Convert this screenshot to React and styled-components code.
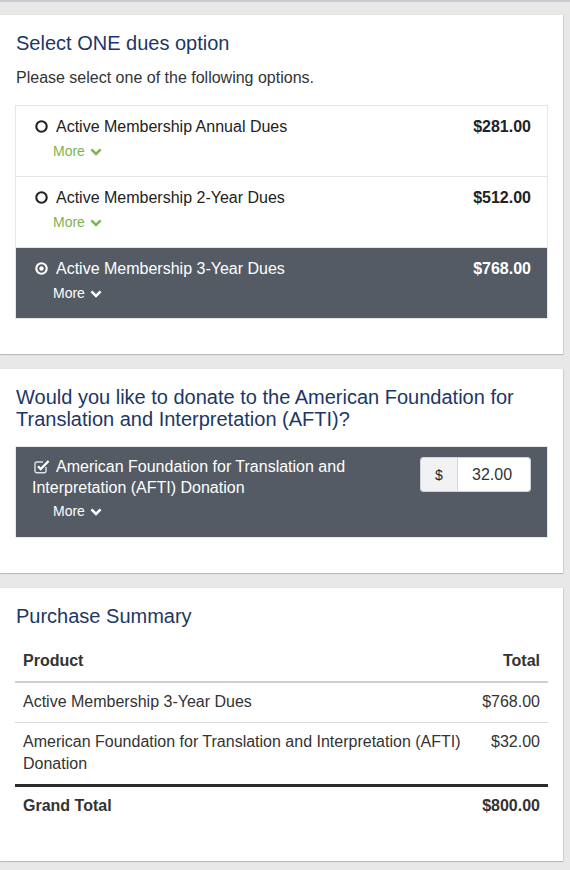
import React from 'react';
import styled, { createGlobalStyle } from 'styled-components';

const GlobalStyle = createGlobalStyle`
    html, body {
        margin: 0;
        padding: 0;
        background: #e8e8e8;
        font-family: "Liberation Sans", Arial, Helvetica, sans-serif;
        color: #222;
    }
`;

const duesOptions = [
    { id: 'annual', label: 'Active Membership Annual Dues', price: '$281.00' },
    { id: '2year', label: 'Active Membership 2-Year Dues', price: '$512.00' },
    { id: '3year', label: 'Active Membership 3-Year Dues', price: '$768.00' }
];

const summaryRows = [
    { product: 'Active Membership 3-Year Dues', total: '$768.00' },
    { product: 'American Foundation for Translation and Interpretation (AFTI) Donation', total: '$32.00' }
];

// little drawn icons (font-awesome 4 look)
const RadioIcon = ({ checked }) => (
    <svg width="13" height="13" viewBox="0 0 13 13">
        <circle cx="6.5" cy="6.5" r="5.2" fill="none" stroke="currentColor" strokeWidth="2.1" />
        {checked && <circle cx="6.5" cy="6.5" r="2.2" fill="currentColor" />}
    </svg>
);

const CheckIcon = () => (
    <svg width="16" height="15" viewBox="0 0 16 15">
        <path d="M12 8 V12 a1.8 1.8 0 0 1 -1.8 1.8 H2.8 A1.8 1.8 0 0 1 1 12 V4.8 A1.8 1.8 0 0 1 2.8 3 H9"
            fill="none" stroke="#dfe1e4" strokeWidth="1.4" />
        <polyline points="4,7.3 6.7,10 14.6,2" fill="none" stroke="currentColor" strokeWidth="2.3" />
    </svg>
);

const Chevron = () => (
    <svg width="12" height="8" viewBox="0 0 12 8">
        <polyline points="1.4,1.4 6,6 10.6,1.4" fill="none" stroke="currentColor" strokeWidth="2.6" />
    </svg>
);

export default function App() {
    const selected = '3year';

    return (
        <Page>
            <GlobalStyle />

            {/* dues */}
            <Card>
                <Title>Select ONE dues option</Title>
                <Intro>Please select one of the following options.</Intro>
                <OptionList>
                    {duesOptions.map((o) => {
                        const active = o.id === selected;
                        return (
                            <OptionRow key={o.id} $active={active}>
                                <OptionMain>
                                    <OptionLabel>
                                        <IconSlot><RadioIcon checked={active} /></IconSlot>
                                        {o.label}
                                    </OptionLabel>
                                    <MoreLink $active={active}>
                                        More <Chevron />
                                    </MoreLink>
                                </OptionMain>
                                <Price>{o.price}</Price>
                            </OptionRow>
                        );
                    })}
                </OptionList>
            </Card>

            {/* donation */}
            <Card>
                <Title>
                    Would you like to donate to the American Foundation for Translation and Interpretation (AFTI)?
                </Title>
                <DonateBox>
                    <DonateText>
                        <OptionLabel>
                            <IconSlot $check><CheckIcon /></IconSlot>
                            American Foundation for Translation and Interpretation (AFTI) Donation
                        </OptionLabel>
                        <MoreLink $active $donate>
                            More <Chevron />
                        </MoreLink>
                    </DonateText>
                    <InputGroup>
                        <Addon>$</Addon>
                        <AmountInput defaultValue="32.00" />
                    </InputGroup>
                </DonateBox>
            </Card>

            {/* summary */}
            <Card $last>
                <Title>Purchase Summary</Title>
                <SummaryTable>
                    <thead>
                        <tr>
                            <th>Product</th>
                            <th className="right">Total</th>
                        </tr>
                    </thead>
                    <tbody>
                        {summaryRows.map((r) => (
                            <tr key={r.product}>
                                <td>{r.product}</td>
                                <td className="right">{r.total}</td>
                            </tr>
                        ))}
                    </tbody>
                    <tfoot>
                        <tr>
                            <td>Grand Total</td>
                            <td className="right">$800.00</td>
                        </tr>
                    </tfoot>
                </SummaryTable>
            </Card>
        </Page>
    );
}

/* ---------------- styles ---------------- */

const Page = styled.div`
    border-top: 2px solid #c7cbd1;
    padding: 13px 7px 8px 0;
    display: flex;
    flex-direction: column;
    gap: 15px;
`;

const Card = styled.section`
    background: #fff;
    box-shadow: 0 1px 1px rgba(0, 0, 0, 0.18), 1px 0 1px rgba(0, 0, 0, 0.08);
    padding: 16px 15px ${(p) => (p.$last ? '36px' : '35px')} 15px;
`;

const Title = styled.h2`
    margin: 0 0 14px 1px;
    font-size: 20px;
    font-weight: normal;
    line-height: 22px;
    color: #1c3765;
    padding-top: 1px;
`;

const Intro = styled.p`
    margin: 0 0 17px 1px;
    font-size: 16px;
    line-height: 20px;
    color: #333;
`;

const OptionList = styled.div`
    border: 1px solid #e6e6e6;
    border-bottom: none;
`;

const OptionRow = styled.div`
    display: flex;
    justify-content: space-between;
    align-items: flex-start;
    padding: 11px 16px 15px 16px;
    border-bottom: 1px solid #e6e6e6;
    background: ${(p) => (p.$active ? '#545b64' : '#fff')};
    color: ${(p) => (p.$active ? '#fff' : '#222')};
`;

const OptionMain = styled.div`
    display: flex;
    flex-direction: column;
`;

const OptionLabel = styled.div`
    font-size: 16px;
    line-height: 20px;
`;

const IconSlot = styled.span`
    display: inline-flex;
    vertical-align: ${(p) => (p.$check ? '-2px' : '-1px')};
    margin: 0 ${(p) => (p.$check ? '6px' : '8px')} 0 ${(p) => (p.$check ? '2px' : '3px')};
`;

const MoreLink = styled.span`
    display: inline-flex;
    align-items: center;
    gap: 5px;
    margin: ${(p) => (p.$donate ? '3px' : '4px')} 0 0 21px;
    font-size: 14px;
    line-height: 20px;
    color: ${(p) => (p.$active ? '#fff' : '#7cb54c')};

    svg {
        margin-top: 2px;
    }
`;

const Price = styled.div`
    font-size: 16px;
    font-weight: bold;
    line-height: 20px;
`;

const DonateBox = styled.div`
    display: flex;
    justify-content: space-between;
    align-items: flex-start;
    gap: 20px;
    margin-top: 16px;
    padding: 9px 16px 16px 16px;
    background: #545b64;
    border: 1px solid #e6e9ee;
    color: #fff;

    ${OptionLabel} {
        line-height: 21px;
    }
`;

const DonateText = styled.div`
    display: flex;
    flex-direction: column;
    align-items: flex-start;
    flex: 1;
`;

const InputGroup = styled.div`
    display: flex;
    margin-top: 1px;
    height: 33px;
    border-radius: 3px;
    overflow: hidden;
    border: 1px solid #d0d3d8;
    flex-shrink: 0;
`;

const Addon = styled.span`
    width: 36px;
    display: flex;
    align-items: center;
    justify-content: center;
    background: #f2f2f4;
    border-right: 1px solid #d6d8dc;
    color: #222;
    font-size: 14px;
`;

const AmountInput = styled.input`
    width: 58px;
    border: none;
    outline: none;
    padding: 0 0 0 14px;
    font-family: inherit;
    font-size: 16px;
    color: #333;
    background: #fff;
`;

const SummaryTable = styled.table`
    width: 100%;
    border-collapse: collapse;
    margin-top: 15px;
    font-size: 16px;
    line-height: 22px;
    color: #333;

    th, td {
        padding: 8px 8px;
        text-align: left;
        vertical-align: top;
    }

    th {
        font-weight: bold;
        padding-bottom: 9px;
        border-bottom: 2px solid #cfcfcf;
    }

    tbody td {
        padding-bottom: 9px;
        border-bottom: 1px solid #dcdcdc;
    }

    tbody tr:last-child td {
        border-bottom: 3px solid #2b2b2b;
    }

    tfoot td {
        font-weight: bold;
    }

    .right {
        text-align: right;
        white-space: nowrap;
    }
`;
